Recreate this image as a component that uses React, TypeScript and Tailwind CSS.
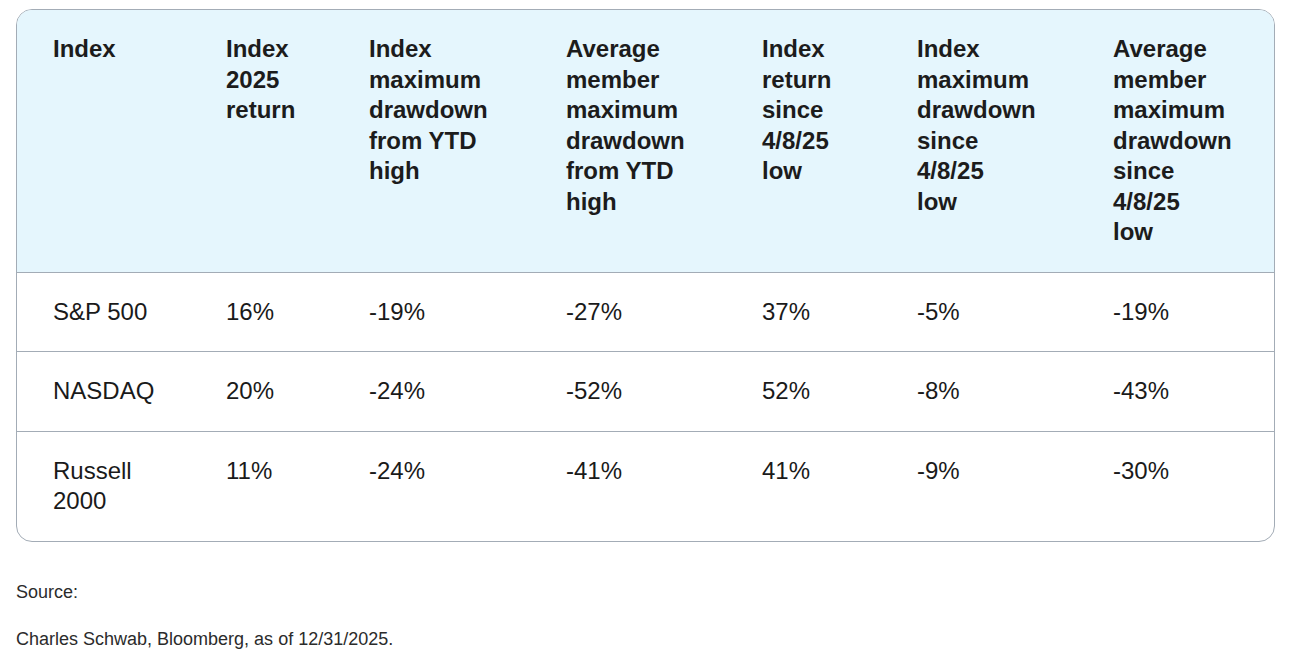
import React from "react";

const headers: string[][] = [
  ["Index"],
  ["Index", "2025", "return"],
  ["Index", "maximum", "drawdown", "from YTD", "high"],
  ["Average", "member", "maximum", "drawdown", "from YTD", "high"],
  ["Index", "return", "since", "4/8/25", "low"],
  ["Index", "maximum", "drawdown", "since", "4/8/25", "low"],
  ["Average", "member", "maximum", "drawdown", "since", "4/8/25", "low"],
];

const rows: string[][][] = [
  [["S&P 500"], ["16%"], ["-19%"], ["-27%"], ["37%"], ["-5%"], ["-19%"]],
  [["NASDAQ"], ["20%"], ["-24%"], ["-52%"], ["52%"], ["-8%"], ["-43%"]],
  [["Russell", "2000"], ["11%"], ["-24%"], ["-41%"], ["41%"], ["-9%"], ["-30%"]],
];

const rowPad = ["pb-6", "pb-[25px]", "pb-[25px]"];

const widths = [173, 143, 197, 196, 155, 196, 197];

export default function App() {
  return (
    <div
      className="bg-white min-h-[653px] pl-4 pt-[9px]"
      style={{ fontFamily: '"Liberation Sans", Arial, sans-serif' }}
    >
      <div className="w-[1259px] border border-[#a3acb6] rounded-2xl overflow-hidden">
        <table className="w-full table-fixed border-collapse">
          <colgroup>
            {widths.map((w, i) => (
              <col key={i} style={{ width: w }} />
            ))}
          </colgroup>
          <thead>
            <tr className="bg-[#e5f6fd]">
              {headers.map((h, i) => (
                <th
                  key={i}
                  className="text-left align-top pl-9 pr-2 pt-6 pb-6 text-[24px] leading-[30.5px] font-bold text-[#1c1c1c]"
                >
                  {h.map((line, j) => (
                    <div key={j} className="whitespace-nowrap">
                      {line}
                    </div>
                  ))}
                </th>
              ))}
            </tr>
          </thead>
          <tbody>
            {rows.map((r, i) => (
              <tr key={i} className="border-t border-[#a3acb6]">
                {r.map((c, j) => (
                  <td
                    key={j}
                    className={`text-left align-top pl-9 pr-2 pt-6 ${rowPad[i]} text-[24px] leading-[30px] text-[#1a1a1a]`}
                  >
                    {c.map((line, k) => (
                      <div key={k} className="whitespace-nowrap">
                        {line}
                      </div>
                    ))}
                  </td>
                ))}
              </tr>
            ))}
          </tbody>
        </table>
      </div>
      <p className="mt-[38px] text-[18px] leading-[24px] text-[#2b2b2b]">Source:</p>
      <p className="mt-[23px] text-[18px] leading-[24px] text-[#2b2b2b]">
        Charles Schwab, Bloomberg, as of 12/31/2025.
      </p>
    </div>
  );
}
